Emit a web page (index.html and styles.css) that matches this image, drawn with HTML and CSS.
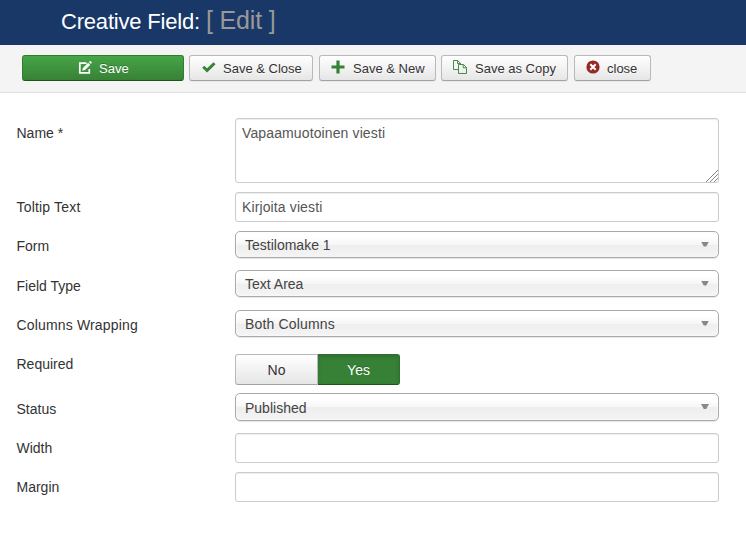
FILE: index.html
```html
<!DOCTYPE html>
<html lang="en">
<head>
<meta charset="utf-8">
<title>Creative Field: Edit</title>
<link rel="stylesheet" href="styles.css">
</head>
<body>
<header class="header"><h1 class="title"><span class="title-main">Creative Field:</span><small class="title-mode">[ Edit ]</small></h1></header>
<nav class="toolbar">
  <button class="btn btn-primary"><svg class="icon icon-edit" viewBox="0 0 14 14"><path d="M8.5 2.2H1.8v9.6h9.5V8" fill="none" stroke="currentColor" stroke-width="1.7"/><path d="M4.2 9.8l.7-2.8 5.2-5.2 2.1 2.1L7 9.1z" fill="currentColor"/><path d="M10.8 1.1l.9-.8h1.1l.8.8v1l-.8.8z" fill="currentColor"/></svg><span class="btn-text">Save</span></button>
  <button class="btn save-close"><svg class="icon green" viewBox="0 0 14 14"><path d="M1.2 6.7l3.9 3.7 7.4-7.2" fill="none" stroke="currentColor" stroke-width="2.9"/></svg><span class="btn-text">Save &amp; Close</span></button>
  <button class="btn save-new"><svg class="icon green" viewBox="0 0 14 14"><path d="M7 .5v13M.5 7h13" fill="none" stroke="currentColor" stroke-width="3.2" stroke-linejoin="round"/></svg><span class="btn-text">Save &amp; New</span></button>
  <button class="btn save-copy"><svg class="icon icon-copy green" viewBox="0 0 14 14"><path d="M5.5 9.5h-5v-9h4.2l2.8 2.8v1.2M4.5.5v3h3M5.5 4.5h5l3 3v6h-8zM10.2 4.5v3.3h3.3" fill="none" stroke="currentColor" stroke-width=".9"/></svg><span class="btn-text">Save as Copy</span></button>
  <button class="btn close"><svg class="icon red" viewBox="0 0 14 14"><circle cx="7" cy="7" r="6.6" fill="currentColor"/><path d="M4.3 4.3l5.4 5.4M9.7 4.3L4.3 9.7" stroke="#fff" stroke-width="2"/></svg><span class="btn-text">close</span></button>
</nav>
<main class="form">
  <div class="row row-area"><label class="label" for="name">Name *</label><div class="area-wrap"><textarea class="field area" id="name">Vapaamuotoinen viesti</textarea><svg class="grip" viewBox="0 0 12 12"><path d="M0 12L12 0M4 12l8-8M8 12l4-4" fill="none" stroke="#888"/></svg></div></div>
  <div class="row"><label class="label label-tip" for="tip">Toltip Text</label><input class="field tip" id="tip" value="Kirjoita viesti"></div>
  <div class="row"><span class="label">Form</span><div class="select"><span>Testilomake 1</span><i class="arrow"></i></div></div>
  <div class="row row-40"><span class="label label-low">Field Type</span><div class="select"><span>Text Area</span><i class="arrow"></i></div></div>
  <div class="row row-wrapping"><span class="label label-wrapping">Columns Wrapping</span><div class="select select-wrapping"><span>Both Columns</span><i class="arrow"></i></div></div>
  <div class="row"><span class="label label-required">Required</span><div class="toggle"><span class="option">No</span><span class="option active">Yes</span></div></div>
  <div class="row row-40"><span class="label label-low">Status</span><div class="select select-status"><span>Published</span><i class="arrow"></i></div></div>
  <div class="row"><label class="label" for="width">Width</label><input class="field" id="width"></div>
  <div class="row"><label class="label" for="margin">Margin</label><input class="field" id="margin"></div>
</main>
</body>
</html>
```
FILE: styles.css
```css
* { box-sizing: border-box; }
body { margin: 0; background: #fff; color: #333; font-family: "Liberation Sans", Arial, sans-serif; font-size: 14px; overflow: hidden; }
.header { height: 45px; background: #1a3867; padding-left: 61px; }
.title { margin: 0; display: flex; align-items: baseline; font-weight: 400; font-size: 22px; line-height: 40px; color: #fff; }
.title-main { width: 145px; white-space: nowrap; letter-spacing: -.2px; }
.title-mode { font-size: 25px; color: #999; white-space: nowrap; letter-spacing: -.15px; }
.toolbar { height: 48px; display: flex; gap: 5px; padding: 10px 0 0 22px; background: #f4f4f4; border-bottom: 1px solid #e0e0e0; }
.btn { height: 26px; display: flex; align-items: center; padding: 0 0 0 12px; gap: 7px; font: 13px/24px "Liberation Sans", Arial, sans-serif; color: #333; white-space: nowrap; background: linear-gradient(#fff, #e6e6e6); border: 1px solid #b9b9b9; border-bottom-color: #a2a2a2; border-radius: 3px; box-shadow: inset 0 1px 0 #fff, 0 1px 1px rgba(0,0,0,.05); text-shadow: 0 1px 1px rgba(255,255,255,.75); }
.btn-text { padding-top: 2px; }
.btn-primary { width: 162px; padding-left: 55px; color: #fff; background: linear-gradient(#46a546, #378137); border-color: #2f7d2f; border-bottom-color: #1d551d; box-shadow: none; text-shadow: 0 -1px 0 rgba(0,0,0,.25); }
.save-close { width: 124px; }
.save-new { width: 117px; margin-left: 1px; padding-left: 11px; gap: 8px; }
.save-copy { width: 127px; }
.close { width: 77px; margin-left: 1px; padding-left: 11px; }
.icon { width: 14px; height: 14px; flex: none; margin-bottom: 2px; }
.icon-edit { margin-bottom: 0; }
.icon-copy { margin-left: -1px; margin-right: 1px; }
.green { color: #378137; }
.red { color: #942a25; }
.form { padding: 25px 27px 0 16.5px; }
.row { display: grid; grid-template-columns: 218.5px 484px; height: 39px; align-items: start; }
.row-area { height: 74px; }
.row-40 { height: 40px; }
.row-wrapping { height: 44px; }
.label { line-height: 30px; white-space: nowrap; }
.label-low { padding-top: 1px; }
.label-tip { letter-spacing: .18px; }
.label-wrapping { letter-spacing: .16px; }
.label-required { line-height: 20px; }
.field { display: block; width: 484px; height: 30px; margin: 0; padding: 4px 6px; border: 1px solid #ccc; border-radius: 3px; background: #fff; box-shadow: inset 0 1px 1px rgba(0,0,0,.075); color: #555; font: 14px/20px "Liberation Sans", Arial, sans-serif; letter-spacing: .12px; }
.area-wrap { position: relative; }
.area { height: 65px; resize: none; overflow: hidden; }
.grip { position: absolute; right: 1px; bottom: 1px; width: 12px; height: 12px; }
.select { height: 27px; display: flex; align-items: center; justify-content: space-between; padding: 1px 9px 0; border: 1px solid #aaa; border-radius: 5px; color: #444; background: linear-gradient(#fff 20%, #f6f6f6 50%, #eee 52%, #f4f4f4 100%); box-shadow: inset 0 0 3px #fff, 0 1px 1px rgba(0,0,0,.1); }
.select-wrapping { letter-spacing: .16px; }
.select-status { height: 28px; }
.arrow { width: 8px; height: 5px; background: #888; clip-path: polygon(0 0, 100% 0, 65% 100%, 35% 100%); margin-top: -2px; }
.toggle { display: flex; width: 165px; height: 31px; }
.option { flex: 1; text-align: center; line-height: 30px; border: 1px solid #b9b9b9; border-bottom-color: #a2a2a2; border-radius: 3px 0 0 3px; background: linear-gradient(#fff, #e6e6e6); }
.option.active { border: 1px solid #2f702f; border-bottom-color: #1d551d; border-left: 0; border-radius: 0 3px 3px 0; color: #fff; background: #378137; box-shadow: inset 0 2px 4px rgba(0,0,0,.15); text-shadow: 0 -1px 0 rgba(0,0,0,.25); }
```
